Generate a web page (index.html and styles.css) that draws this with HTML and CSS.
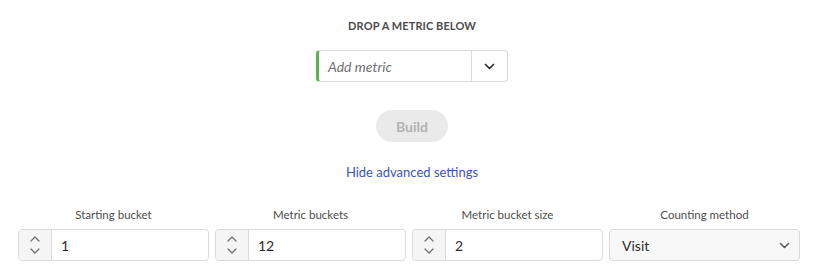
FILE: index.html
```html
<!DOCTYPE html>
<html>
<head>
<meta charset="utf-8">
<link rel="stylesheet" href="styles.css">
</head>
<body>
<div class="panel">
  <div class="top">
    <div class="title">DROP A METRIC BELOW</div>
    <div class="combo">
      <div class="combo-input">Add metric</div>
      <div class="combo-btn">
        <svg width="11" height="7" viewBox="0 0 11 7"><path d="M1.5 1.5 L5.5 5.5 L9.5 1.5" fill="none" stroke="#2c2c2c" stroke-width="1.7" stroke-linecap="round" stroke-linejoin="round"/></svg>
      </div>
    </div>
    <div class="build">Build</div>
    <div class="link">Hide advanced settings</div>
  </div>
  <div class="settings">
    <div class="field">
      <div class="label">Starting bucket</div>
      <div class="stepper">
        <div class="arrows">
          <svg width="10" height="6" viewBox="0 0 10 6"><path d="M1 5 L5 1 L9 5" fill="none" stroke="#6e6e6e" stroke-width="1.2" stroke-linecap="round" stroke-linejoin="round"/></svg>
          <svg width="10" height="6" viewBox="0 0 10 6"><path d="M1 1 L5 5 L9 1" fill="none" stroke="#6e6e6e" stroke-width="1.2" stroke-linecap="round" stroke-linejoin="round"/></svg>
        </div>
        <div class="value">1</div>
      </div>
    </div>
    <div class="field">
      <div class="label">Metric buckets</div>
      <div class="stepper">
        <div class="arrows">
          <svg width="10" height="6" viewBox="0 0 10 6"><path d="M1 5 L5 1 L9 5" fill="none" stroke="#6e6e6e" stroke-width="1.2" stroke-linecap="round" stroke-linejoin="round"/></svg>
          <svg width="10" height="6" viewBox="0 0 10 6"><path d="M1 1 L5 5 L9 1" fill="none" stroke="#6e6e6e" stroke-width="1.2" stroke-linecap="round" stroke-linejoin="round"/></svg>
        </div>
        <div class="value">12</div>
      </div>
    </div>
    <div class="field">
      <div class="label">Metric bucket size</div>
      <div class="stepper">
        <div class="arrows">
          <svg width="10" height="6" viewBox="0 0 10 6"><path d="M1 5 L5 1 L9 5" fill="none" stroke="#6e6e6e" stroke-width="1.2" stroke-linecap="round" stroke-linejoin="round"/></svg>
          <svg width="10" height="6" viewBox="0 0 10 6"><path d="M1 1 L5 5 L9 1" fill="none" stroke="#6e6e6e" stroke-width="1.2" stroke-linecap="round" stroke-linejoin="round"/></svg>
        </div>
        <div class="value">2</div>
      </div>
    </div>
    <div class="field">
      <div class="label">Counting method</div>
      <div class="select">
        <span>Visit</span>
        <svg width="11" height="7" viewBox="0 0 11 7"><path d="M1.5 1.5 L5.5 5.5 L9.5 1.5" fill="none" stroke="#5a5a5a" stroke-width="1.6" stroke-linecap="round" stroke-linejoin="round"/></svg>
      </div>
    </div>
  </div>
</div>
</body>
</html>
```

FILE: styles.css
```css
html, body {
  margin: 0;
  padding: 0;
  background: #ffffff;
}
body {
  font-family: "Lato", "Noto Sans", sans-serif;
  color: #2c2c2c;
}
.panel {
  display: flex;
  flex-direction: column;
  padding: 17px 17px 0 18px;
}
.top {
  display: flex;
  flex-direction: column;
  align-items: center;
  padding-left: 6px;
}
.title {
  font-size: 11px;
  font-weight: 700;
  letter-spacing: 0.1px;
  line-height: 18px;
  color: #4b4b4b;
}
.combo {
  margin-top: 15px;
  display: flex;
  width: 192px;
  height: 32px;
  box-sizing: border-box;
  border: 1px solid #dadada;
  border-left: 3px solid #5faf54;
  border-radius: 4px;
}
.combo-input {
  flex: 1;
  display: flex;
  align-items: center;
  padding-left: 9px;
  font-style: italic;
  font-size: 14px;
  color: #707070;
}
.combo-btn {
  width: 35px;
  border-left: 1px solid #dadada;
  display: flex;
  align-items: center;
  justify-content: center;
}
.build {
  margin-top: 28px;
  width: 72px;
  height: 32px;
  border-radius: 16px;
  background: #eaeaea;
  color: #b3b3b3;
  font-weight: 700;
  font-size: 14px;
  display: flex;
  align-items: center;
  justify-content: center;
}
.link {
  margin-top: 20px;
  line-height: 20px;
  font-size: 13px;
  color: #3b55b8;
}
.settings {
  margin-top: 23px;
  display: grid;
  grid-template-columns: repeat(4, 1fr);
  column-gap: 6px;
}
.field {
  display: flex;
  flex-direction: column;
  gap: 5px;
}
.label {
  text-align: center;
  font-size: 11.5px;
  line-height: 19px;
  color: #4b4b4b;
}
.stepper, .select {
  height: 32px;
  box-sizing: border-box;
  border: 1px solid #dadada;
  border-radius: 4px;
  display: flex;
}
.arrows {
  width: 32px;
  background: #f5f5f5;
  border-right: 1px solid #dadada;
  border-radius: 3px 0 0 3px;
  display: flex;
  flex-direction: column;
  align-items: center;
  justify-content: center;
  gap: 6px;
}
.value {
  display: flex;
  align-items: center;
  padding-left: 9px;
  font-size: 14px;
  color: #2c2c2c;
}
.select {
  background: #f8f8f8;
  align-items: center;
  justify-content: space-between;
  padding: 0 9px 0 12px;
  font-size: 14px;
}
```
